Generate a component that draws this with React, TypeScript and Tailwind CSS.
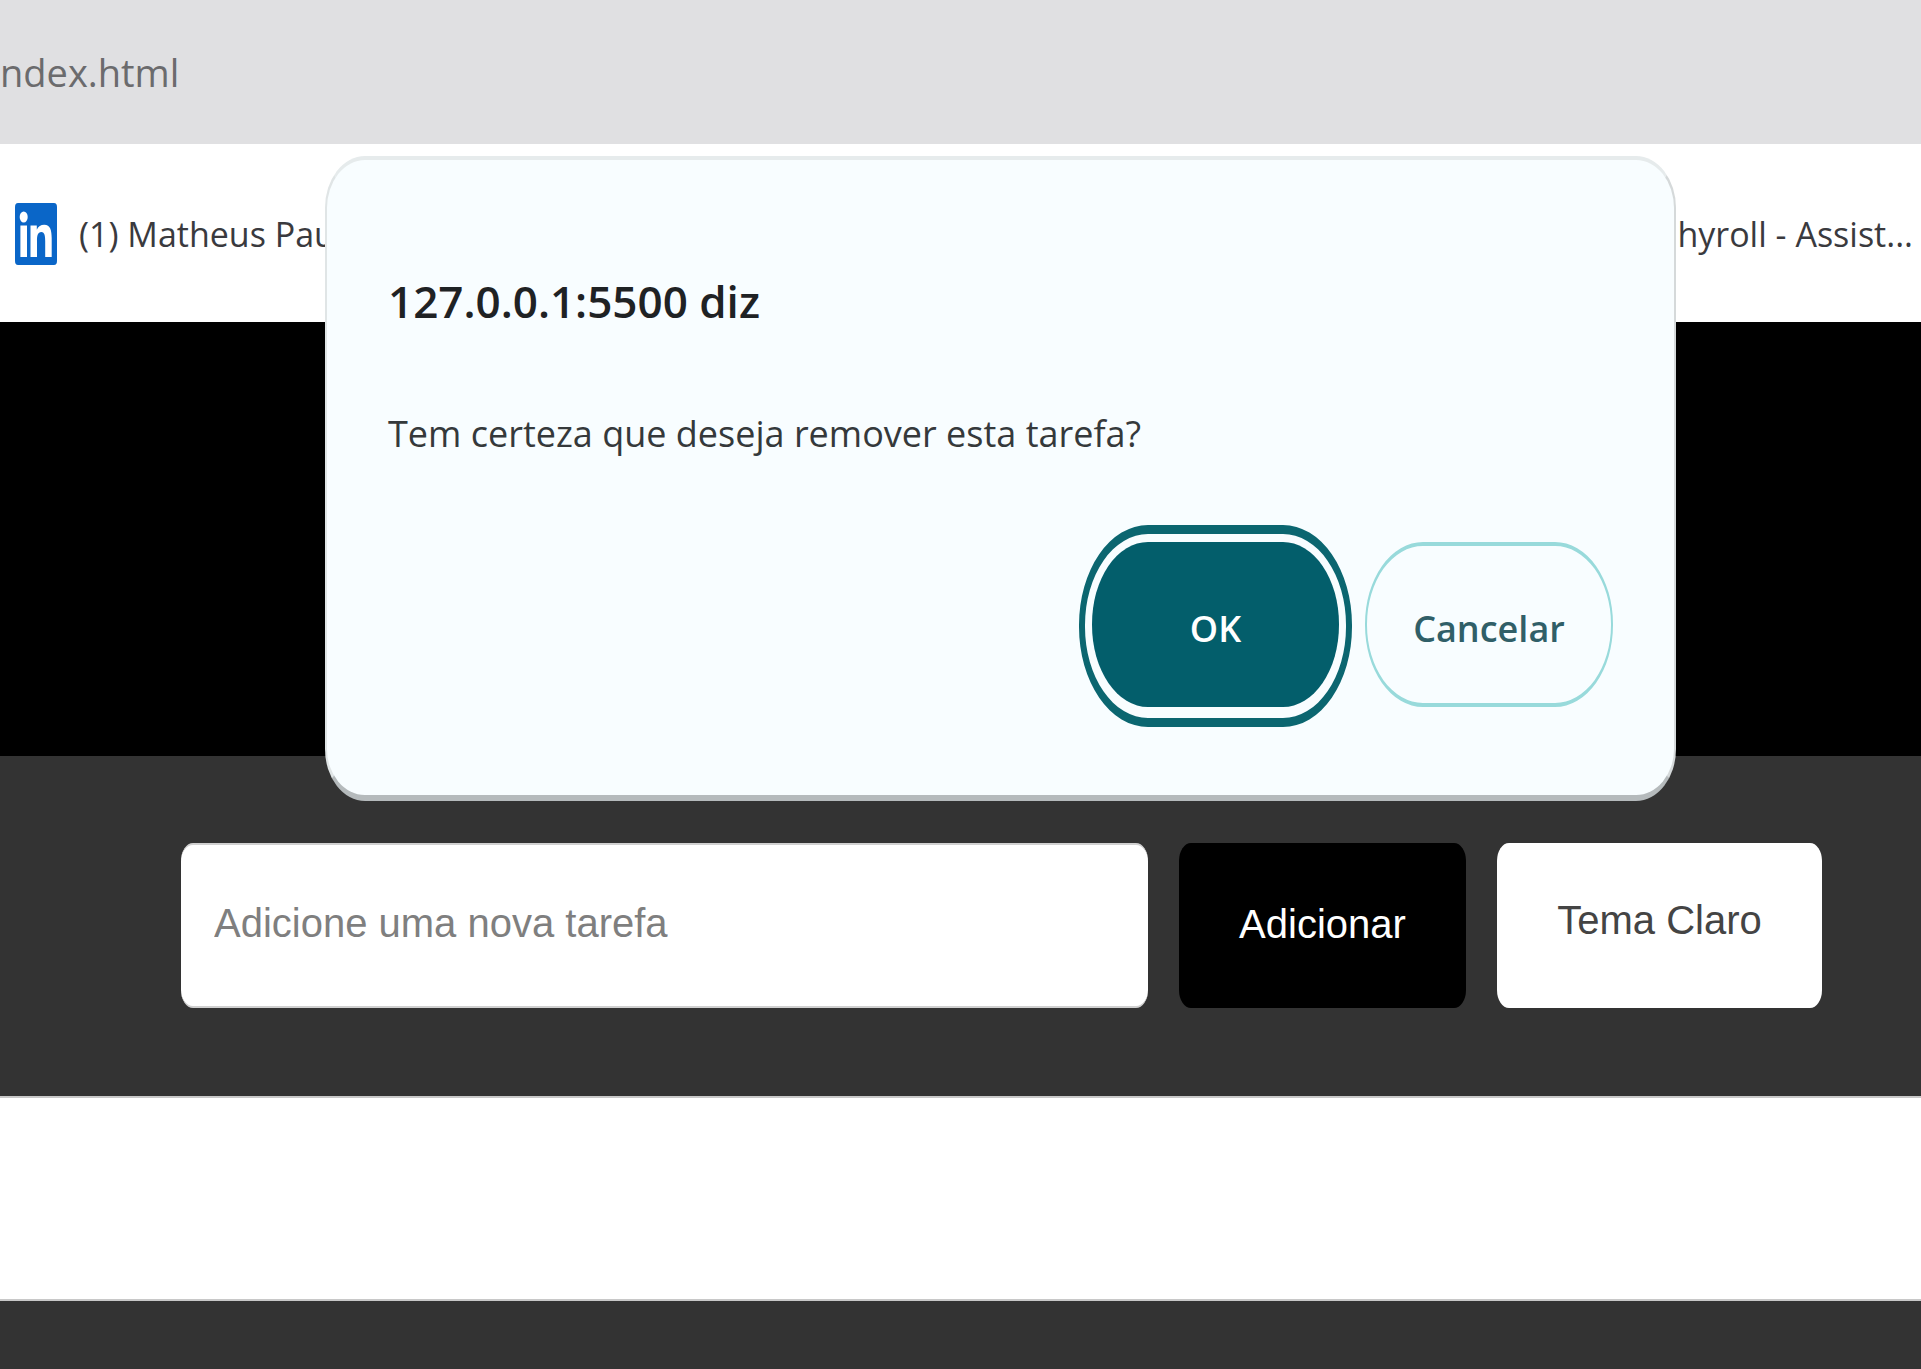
function LinkedInIcon() {
  return (
    <svg viewBox="0 0 42 62" className="h-[62px] w-[42px] shrink-0" aria-hidden="true">
      <rect width="42" height="62" rx="3" ry="4" fill="#0a66c8" />
      <g fill="#fff">
        <ellipse cx="8.7" cy="14" rx="4" ry="5.5" />
        <path d="M5.400 22.500h6.600v31.500H5.400z" />
        <path d="M15.500 22.500h6.300v4.300c1.400-3.200 4.100-5 7.400-5 6.200 0 7.500 5.800 7.500 13.500V54h-6.500V38c0-4.500-.4-9-3.900-9s-4.300 4-4.300 8.600V54h-6.500z" />
      </g>
    </svg>
  );
}

function ConfirmDialog() {
  return (
    <div
      role="dialog"
      aria-labelledby="dialog-title"
      aria-describedby="dialog-message"
      className="absolute top-[156px] right-[245px] left-[325px] rounded-[40px/52px] border-t-4 border-r-2 border-b-6 border-l-2 border-t-[#e6ebec] border-r-[#d5d9da] border-b-[#b5babc] border-l-[#e0e5e6] bg-[#f8fdff] px-[61px] pt-[109px] pb-[68px]"
    >
      <h1 id="dialog-title" className="text-[44px] leading-[64px] font-semibold text-[#1f2224]">
        127.0.0.1:5500 diz
      </h1>
      <p id="dialog-message" className="mt-[75px] text-[36px] leading-[52px] text-[#35393b]">
        Tem certeza que deseja remover esta tarefa?
      </p>
      <div className="mt-[65px] flex items-start justify-end gap-[13px]">
        <div className="rounded-[69px/100px] border-x-6 border-y-9 border-[#0b6670] px-[7px] pt-2 pb-[11px]">
          <button
            type="button"
            className="block h-[165px] w-[247px] rounded-[56px/82px] bg-[#035e6b] pt-2 text-[36px] font-semibold text-white"
          >
            OK
          </button>
        </div>
        <button
          type="button"
          className="mt-[17px] h-[165px] w-[248px] rounded-[58px/82px] border-x-2 border-y-4 border-[#98dadb] pt-2 text-[36px] font-semibold text-[#305f68]"
        >
          Cancelar
        </button>
      </div>
    </div>
  );
}

export default function App() {
  return (
    <div className="relative flex min-h-screen flex-col overflow-hidden bg-[#333333] font-['Open_Sans','Noto_Sans',sans-serif]">
      <header>
        <div className="flex h-[144px] items-center bg-[#e0e0e2] text-[38px] text-[#6b6b6d]">
          <span>ndex.html</span>
        </div>
        <nav className="flex h-[178px] items-center justify-between bg-white pt-0.5 pr-2 pl-[15px] text-[34px] whitespace-nowrap text-[#3a3a3e]">
          <a href="#linkedin" className="flex items-center gap-[22px]">
            <LinkedInIcon />
            <span>(1) Matheus Pau</span>
          </a>
          <a href="#crunchyroll">hyroll - Assist...</a>
        </nav>
      </header>
      <div className="h-[434px] bg-black" />
      <main className="font-['Liberation_Sans',Arial,sans-serif]">
        <form className="flex gap-[31px] pt-[87px] pr-[99px] pb-[88px] pl-[181px] text-[40px]">
          <input
            type="text"
            aria-label="Adicione uma nova tarefa"
            placeholder="Adicione uma nova tarefa"
            className="h-[165px] min-w-0 flex-1 rounded-[12px/18px] border-y-2 border-[#d0d0d0] bg-white px-[33px] pb-1 placeholder:text-[#7f7f7f]"
          />
          <button type="button" className="w-[287px] rounded-[12px/18px] bg-black pb-1 text-white">
            Adicionar
          </button>
          <button type="button" className="w-[325px] rounded-[12px/18px] bg-white pb-3 text-[#444444]">
            Tema Claro
          </button>
        </form>
        <div className="h-[205px] border-y-2 border-[#c8c8c8] bg-white" />
      </main>
      <ConfirmDialog />
    </div>
  );
}
